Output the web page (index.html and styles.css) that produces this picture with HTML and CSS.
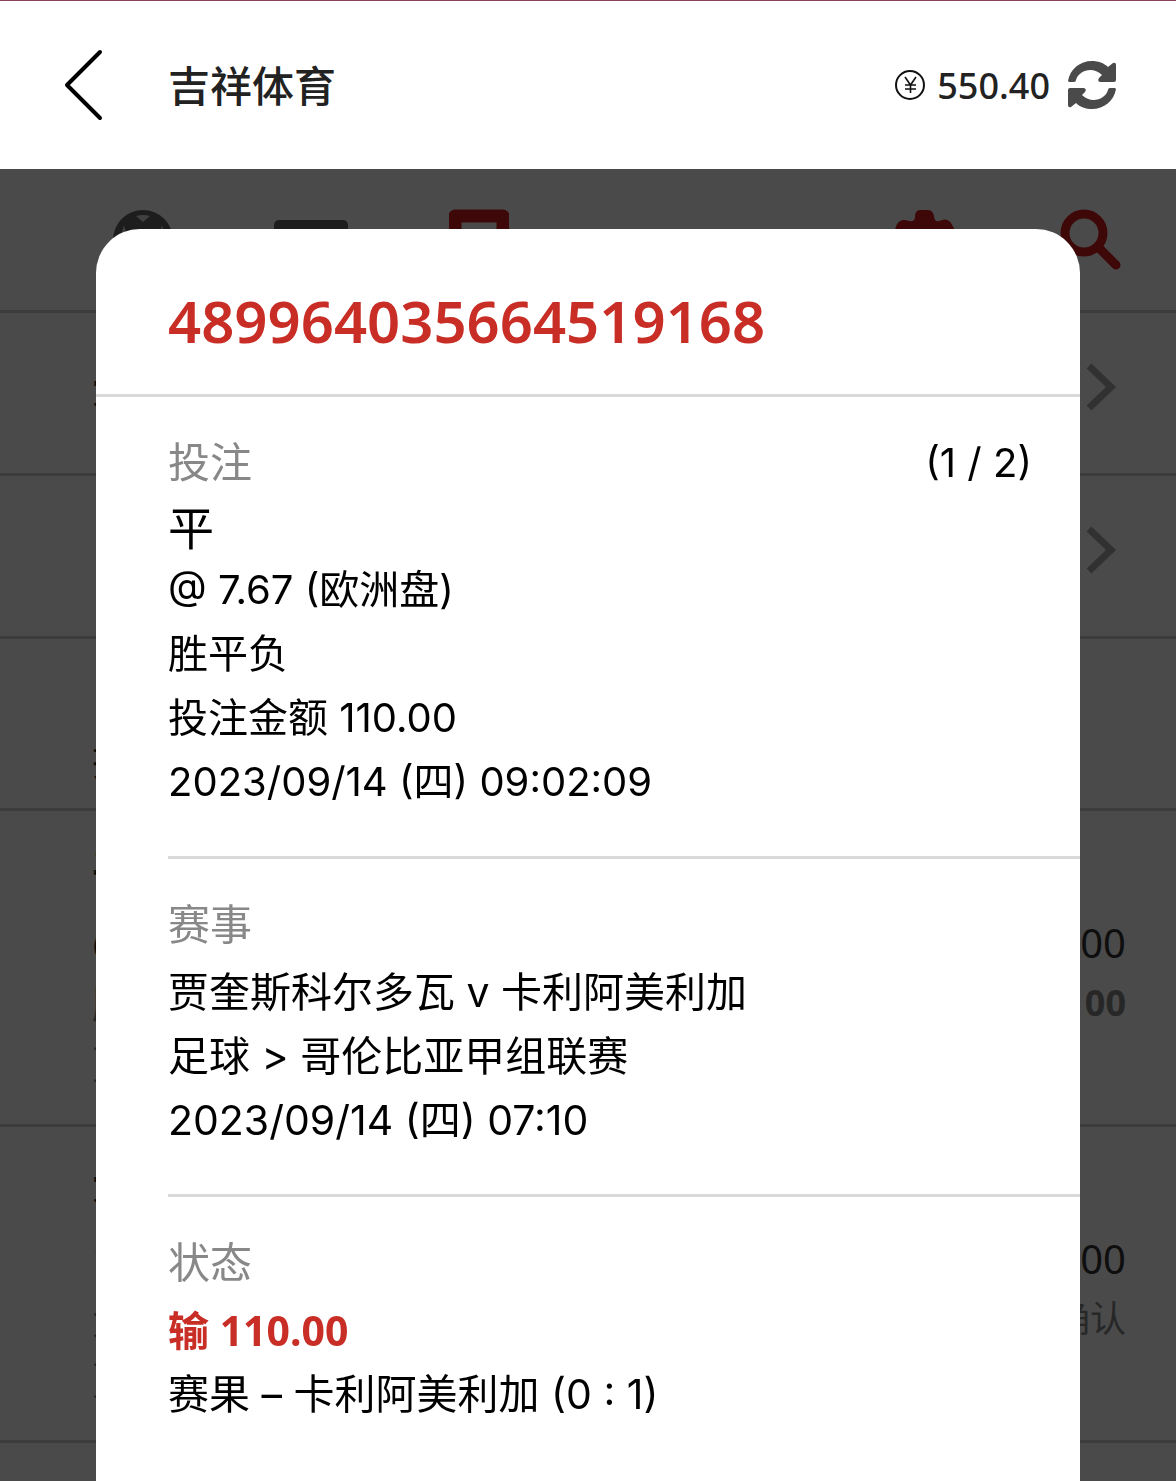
FILE: index.html
```
<!DOCTYPE html>
<html lang="zh-CN">
<head>
  <meta charset="UTF-8">
  <meta name="viewport" content="width=device-width, initial-scale=1">
  <title>吉祥体育</title>
  <link rel="stylesheet" href="styles.css">
</head>
<body>

  <!-- Top bar -->
  <header class="topbar">
    <button type="button" class="icon-btn back" aria-label="返回">
      <svg width="40" height="72" viewBox="0 0 40 72"><path d="M36 3L3 36L36 69" fill="none" stroke="#000" stroke-width="4" stroke-linecap="round" stroke-linejoin="round"/></svg>
    </button>
    <h1>吉祥体育</h1>
    <div class="balance">
      <svg width="30" height="30" viewBox="0 0 30 30" fill="none" stroke="#111" stroke-width="2"><circle cx="15" cy="15" r="14"/><path d="M10 7l5.500 8L21 7M15.500 15v8M10 15h11M10 19h11" stroke-width="1.600"/></svg>
      <span>550.40</span>
      <button type="button" class="icon-btn" aria-label="刷新">
        <svg width="48" height="48" viewBox="0 0 48 48" fill="#4a4a4a"><path d="M0 20C2 8 12 0 24 0c6 0 12 2 16 6l5-4q3-1 3 2v15q0 2-2 2H32q-3-1-1-4l3-3C25 5 11 9 8 19q0 2-2 2H1z"/><path d="M48 28C46 40 36 48 24 48c-6 0-12-2-16-6l-5 4q-3 1-3-2V29q0-2 2-2h14q3 1 1 4l-3 3c9 9 23 5 26-5q0-2 2-2h5z"/></svg>
      </button>
    </div>
  </header>

  <!-- Bet list behind the dialog -->
  <main>
    <nav class="tools">
      <a href="#sports" aria-label="体育"><svg width="60" height="60" viewBox="0 0 60 60"><circle cx="30" cy="31" r="30" fill="#666"/><path d="M23 7q7-2 14 0l-7 6zM11 16l4 16-9 3zM49 16l-4 16 9 3z" fill="#ddd"/></svg></a>
      <a href="#live" aria-label="直播"><svg width="74" height="60" viewBox="0 0 74 60"><rect y="11" width="74" height="46" rx="5" fill="#666"/></svg></a>
      <a href="#bets" aria-label="注单"><svg width="60" height="60" viewBox="0 0 60 60"><rect x="6" y="7" width="48" height="50" fill="none" stroke="#d41c1c" stroke-width="13" stroke-linejoin="round"/></svg></a>
      <a href="#settings" class="push" aria-label="设置"><svg width="68" height="60" viewBox="0 0 68 60"><path d="M29 1h8q5 0 6 6 0 6 5 5 8-4 12 2l5 9v14l-5 9q-4 4-8 2l-10 5-2 6H27l-2-6-10-5q-5 2-8-2l-4-9V23l3-8q4-6 12-3 6 1 6-4 0-7 5-7z" fill="#d41c1c"/></svg></a>
      <a href="#search" aria-label="搜索"><svg width="62" height="62" viewBox="0 0 62 62" fill="none" stroke="#d41c1c"><circle cx="24" cy="24" r="19" stroke-width="9"/><path d="M40 40l16 16" stroke-width="9" stroke-linecap="round"/></svg></a>
    </nav>
    <ul class="bets">
      <li class="link-row"><b>大</b><svg width="32" height="50" viewBox="0 0 32 50"><path d="M4 4L26 25L4 46" fill="none" stroke="#aaa" stroke-width="7"/></svg></li>
      <li class="link-row"><span></span><svg width="32" height="50" viewBox="0 0 32 50"><path d="M4 4L26 25L4 46" fill="none" stroke="#aaa" stroke-width="7"/></svg></li>
      <li class="day-row">投</li>
      <li class="bet">
        <div><b>平</b><span>@</span><small>胜</small><small>贾</small></div>
        <div class="sums"><span>00</span><b>00</b></div>
      </li>
      <li class="bet">
        <div><b>大</b><span>1</span><small>大</small><small>贾</small></div>
        <div class="sums"><span>00</span><small>确认</small></div>
      </li>
    </ul>
  </main>

  <!-- Bet detail dialog -->
  <div class="overlay">
    <article class="dialog" role="dialog" aria-labelledby="betNo">
      <h2 id="betNo">489964035664519168</h2>

      <section>
        <div class="section-head">
          <h3>投注</h3>
          <span>(1 / 2)</span>
        </div>
        <p class="pick">平</p>
        <p>@ 7.67 (欧洲盘)</p>
        <p>胜平负</p>
        <p>投注金额 110.00</p>
        <p>2023/09/14 (四) 09:02:09</p>
      </section>

      <section class="match">
        <h3>赛事</h3>
        <p>贾奎斯科尔多瓦 v 卡利阿美利加</p>
        <p>足球 &gt; 哥伦比亚甲组联赛</p>
        <p>2023/09/14 (四) 07:10</p>
      </section>

      <section class="match">
        <h3>状态</h3>
        <p class="lost">输 110.00</p>
        <p>赛果 – 卡利阿美利加 (0 : 1)</p>
      </section>
    </article>
  </div>

</body>
</html>
```
FILE: styles.css
```
* { box-sizing: border-box; }
body {
  margin: 0;
  background: #fff;
  color: #000;
  font-family: Inter, "Noto Sans CJK SC", sans-serif;
  font-size: 40px;
  overflow: hidden;
}
h1, h2, h3, p, ul { margin: 0; padding: 0; font-weight: 400; }
svg { display: block; }

/* Top bar */
.topbar {
  display: flex;
  align-items: center;
  height: 169px;
  padding: 0 60px 0 64px;
  border-top: 1px solid #8a4358;
}
.icon-btn { padding: 0; border: none; background: none; cursor: pointer; }
.topbar h1 {
  margin-left: 64px;
  padding-bottom: 4px;
  font-size: 42px;
  font-weight: 500;
  color: #222;
}
.balance {
  display: flex;
  align-items: center;
  gap: 12px;
  margin-left: auto;
  font-family: "Noto Sans", sans-serif;
  font-size: 36px;
  font-weight: 500;
  color: #222;
}
.balance .icon-btn { margin-left: 6px; }

/* Icon row */
.tools {
  display: flex;
  align-items: flex-start;
  height: 144px;
  padding: 40px 54px 0 113px;
  border-bottom: 3px solid #d0d0d0;
}
.tools a { margin-right: 101px; }
.tools .push { margin-left: auto; }
.tools a:last-child { margin-right: 0; }

/* Bet list */
.bets {
  list-style: none;
  font-family: "Noto Sans", "Noto Sans CJK SC", sans-serif;
  color: #333;
}
.bets li {
  display: flex;
  justify-content: space-between;
  padding: 0 50px 0 92px;
  border-bottom: 3px solid #d0d0d0;
}
.link-row { height: 163px; align-items: center; }
.bets .link-row { padding-right: 59px; padding-bottom: 12px; }
.bets .day-row { height: 172px; padding-top: 90px; }
.bets .bet { height: 316px; padding-top: 28px; }
.bet div { display: flex; flex-direction: column; line-height: 60px; }
.bet div > :first-child { margin-bottom: 14px; }
.bet small { font-size: 38px; color: #888; }
.bet .sums { padding-top: 74px; text-align: right; }
.bet .sums > :first-child { margin-bottom: 0; }
.sums b { font-size: 36px; color: #888; }
.sums small { font-size: 36px; }

/* Dialog */
.overlay {
  position: fixed;
  top: 169px;
  right: 0;
  bottom: 0;
  left: 0;
  padding: 60px 96px 0;
  background: rgba(0, 0, 0, 0.71);
}
.dialog {
  height: 100%;
  overflow: hidden;
  border-radius: 44px 44px 0 0;
  background: #fff;
}
.dialog h2 {
  padding: 52px 72px 33px;
  border-bottom: 3px solid #d9d9d9;
  font-family: "Noto Sans", sans-serif;
  font-size: 58px;
  font-weight: 600;
  line-height: 80px;
  color: #c82d26;
}
.dialog section {
  margin-left: 72px;
  padding: 34px 0 42px;
  border-bottom: 3px solid #d9d9d9;
  line-height: 64px;
}
.dialog section:last-child { border-bottom: none; }
.section-head {
  display: flex;
  justify-content: space-between;
  padding-right: 48px;
}
.dialog h3 {
  margin-bottom: 3px;
  font-size: 42px;
  color: #888;
}
.dialog .pick { font-size: 46px; line-height: 60px; }
.match { font-size: 41px; }
.dialog .lost {
  font-family: "Noto Sans", "Noto Sans CJK SC", sans-serif;
  font-weight: 700;
  color: #c82d26;
}
```
